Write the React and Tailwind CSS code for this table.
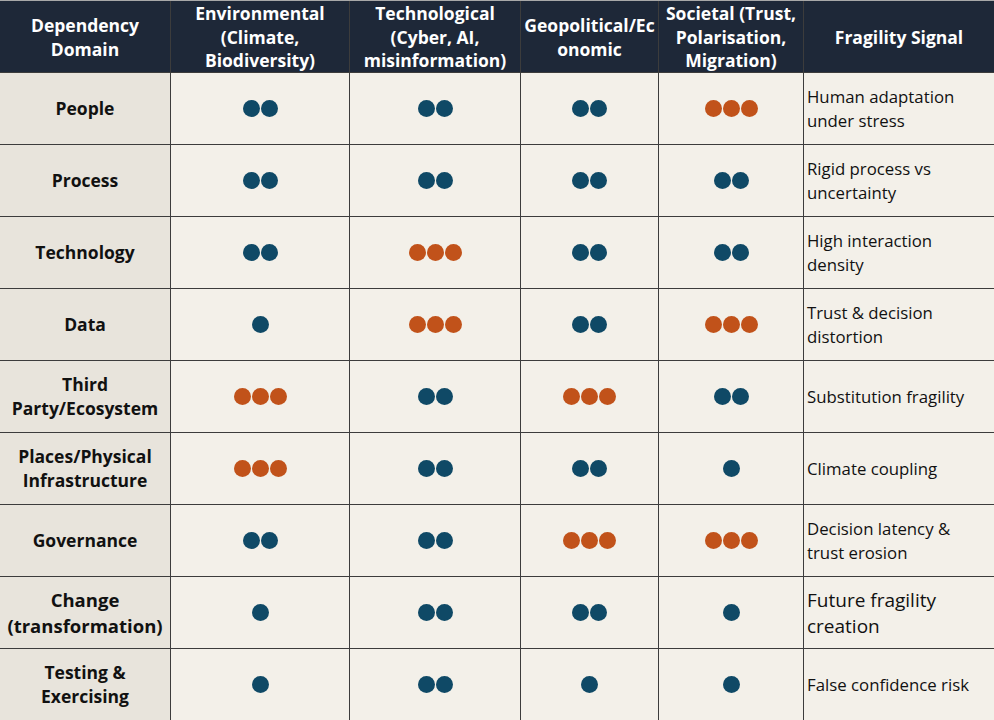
import React from "react"

const rows = [
    {name: "People", dots: ["b2", "b2", "b2", "o3"], signal: "Human adaptation under stress"},
    {name: "Process", dots: ["b2", "b2", "b2", "b2"], signal: "Rigid process vs uncertainty"},
    {name: "Technology", dots: ["b2", "o3", "b2", "b2"], signal: "High interaction density"},
    {name: "Data", dots: ["b1", "o3", "b2", "o3"], signal: "Trust & decision distortion"},
    {name: "Third Party/Ecosystem", dots: ["o3", "b2", "o3", "b2"], signal: "Substitution fragility"},
    {name: "Places/Physical Infrastructure", dots: ["o3", "b2", "b2", "b1"], signal: "Climate coupling"},
    {name: "Governance", dots: ["b2", "b2", "o3", "o3"], signal: "Decision latency & trust erosion"},
    {name: "Change (transformation)", dots: ["b1", "b2", "b2", "b1"], signal: "Future fragility creation", big: true},
    {name: "Testing & Exercising", dots: ["b1", "b2", "b1", "b1"], signal: "False confidence risk"},
]

const headers = [
    "Dependency Domain",
    "Environmental (Climate, Biodiversity)",
    "Technological (Cyber, AI, misinformation)",
    "Geopolitical/Ec onomic",
    "Societal (Trust, Polarisation, Migration)",
    "Fragility Signal",
]

function Dots({code}){
    let count = parseInt(code[1])
    let color = code[0] === "o" ? "bg-[#c1521a]" : "bg-[#0f4966]"
    return(
        <div className="flex gap-px">
            {Array.from({length: count}).map((_, i) => (
                <span key={i} className={"block w-[17px] h-[17px] rounded-full " + color}></span>
            ))}
        </div>
    )
}

function App(){
    return(
        <div className="w-[994px] h-[720px] overflow-hidden bg-[#f3f0e9] border-t border-[#a8a8a8]" style={{fontFamily: '"Open Sans", "Liberation Sans", sans-serif'}}>
            <div className="grid grid-cols-[171px_179px_171px_138px_145px_190px] grid-rows-[72px_repeat(9,72px)]">
                {headers.map((h, i) => (
                    <div key={h} className={"bg-[#1e2838] text-white font-bold text-[17.5px] leading-[23.5px] flex items-center justify-center text-center px-1 pt-[2px] border-b border-[#3c3c3c] " + (i < 5 ? "border-r" : "")}>
                        {h}
                    </div>
                ))}
                {rows.map((r) => (
                    <React.Fragment key={r.name}>
                        <div className={"bg-[#e8e4dc] text-[#111] font-bold flex items-center justify-center text-center px-2 border-r border-b border-[#3c3c3c] " + (r.big ? "text-[18.5px] leading-[26px]" : "text-[17.5px] leading-[23.5px]")}>
                            {r.name}
                        </div>
                        {r.dots.map((d, j) => (
                            <div key={j} className="flex items-center justify-center border-r border-b border-[#3c3c3c]">
                                <Dots code={d}/>
                            </div>
                        ))}
                        <div className={"flex items-center pl-[3px] pr-3 text-[#111] border-b border-[#3c3c3c] " + (r.big ? "text-[19px] leading-[26px]" : "text-[16.8px] leading-[23.5px]")}>
                            {r.signal}
                        </div>
                    </React.Fragment>
                ))}
            </div>
        </div>
    )
}

export default App
